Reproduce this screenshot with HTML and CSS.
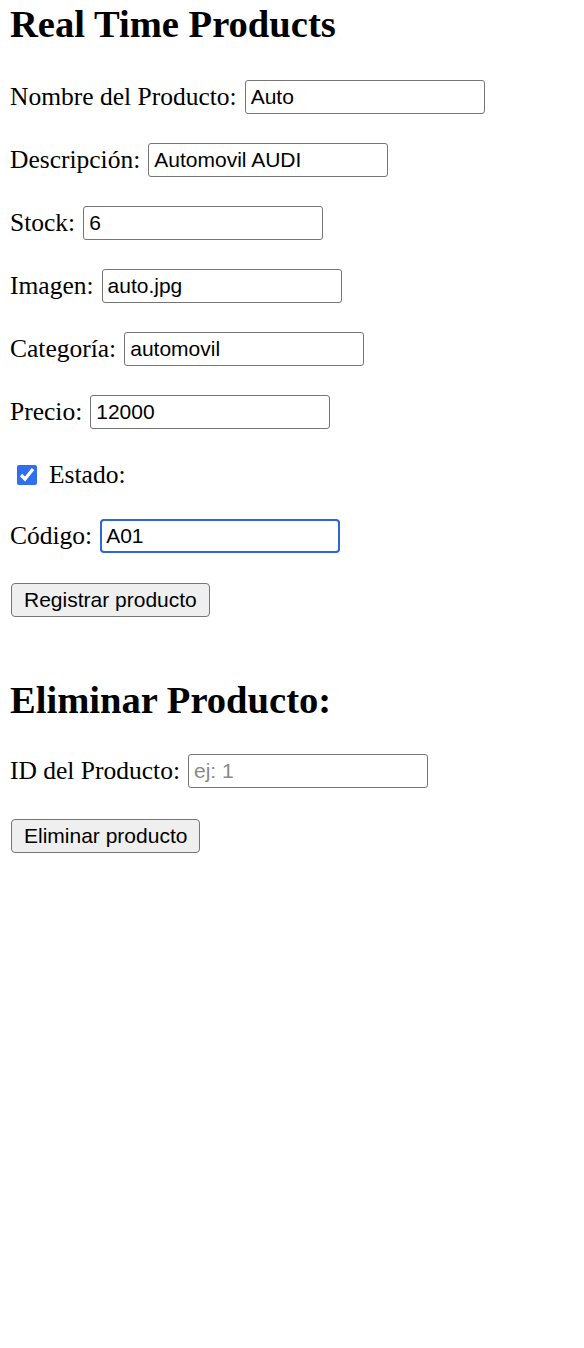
FILE: index.html
```html
<!DOCTYPE html>
<html lang="es">
<head>
<meta charset="utf-8">
<title>Real Time Products</title>
<link rel="stylesheet" href="styles.css">
</head>
<body>
<main class="page">
  <h1 class="title">Real Time Products</h1>
  <form class="form">
    <div class="row"><label class="label" for="nombre">Nombre del Producto:</label><input class="field" id="nombre" type="text" value="Auto"></div>
    <div class="row"><label class="label" for="desc">Descripción:</label><input class="field" id="desc" type="text" value="Automovil AUDI"></div>
    <div class="row"><label class="label" for="stock">Stock:</label><input class="field" id="stock" type="text" value="6"></div>
    <div class="row"><label class="label" for="img">Imagen:</label><input class="field" id="img" type="text" value="auto.jpg"></div>
    <div class="row"><label class="label" for="cat">Categoría:</label><input class="field" id="cat" type="text" value="automovil"></div>
    <div class="row"><label class="label" for="precio">Precio:</label><input class="field" id="precio" type="text" value="12000"></div>
    <div class="row row-check"><input class="check" id="estado" type="checkbox" checked><label class="label" for="estado">Estado:</label></div>
    <div class="row"><label class="label" for="codigo">Código:</label><input class="field field-focus" id="codigo" type="text" value="A01" autofocus></div>
    <div class="row row-btn"><button class="btn" type="button">Registrar producto</button></div>
  </form>
  <h2 class="title title-2">Eliminar Producto:</h2>
  <form class="form form-2">
    <div class="row"><label class="label" for="pid">ID del Producto:</label><input class="field" id="pid" type="text" placeholder="ej: 1"></div>
    <div class="row"><button class="btn" type="button">Eliminar producto</button></div>
  </form>
</main>
</body>
</html>
```
FILE: styles.css
```css
html, body {
  margin: 0;
  padding: 0;
  background: #ffffff;
}
.page {
  padding: 2px 10px 0 10px;
  font-family: "Liberation Serif", "Times New Roman", serif;
  color: #000;
}
.title {
  margin: 0;
  font-size: 38.6px;
  line-height: 44px;
  font-weight: bold;
}
.title-2 {
  margin-top: 61px;
}
.form {
  display: flex;
  flex-direction: column;
  gap: 29px;
  margin-top: 34px;
}
.form-2 {
  margin-top: 32px;
  gap: 31px;
}
.row {
  display: flex;
  align-items: center;
  height: 34px;
}
.row-check {
  height: 32px;
  padding-top: 2px;
  box-sizing: border-box;
}
.row-btn {
  margin-top: 1px;
}
.label {
  font-size: 25.5px;
  margin-right: 8px;
}
.field {
  box-sizing: border-box;
  width: 240px;
  height: 34px;
  margin: 0;
  padding: 1px 5px;
  border: 1px solid #767676;
  border-radius: 3px;
  font-family: "Liberation Sans", Arial, sans-serif;
  font-size: 21px;
  color: #000;
  background: #fff;
  outline: none;
}
.field::placeholder {
  color: #8a8a8a;
}
.field-focus {
  border: 2px solid #2f65d9;
  border-radius: 4px;
  padding: 0 4px;
  caret-color: #000;
}
.check {
  width: 20px;
  height: 20px;
  margin: 0 12px 0 7px;
  accent-color: #2f6fef;
}
.btn {
  box-sizing: border-box;
  height: 34px;
  padding: 0 12px;
  margin: 0 0 0 1px;
  border: 1px solid #767676;
  border-radius: 4px;
  background: #efefef;
  font-family: "Liberation Sans", Arial, sans-serif;
  font-size: 21px;
  color: #000;
}
```
